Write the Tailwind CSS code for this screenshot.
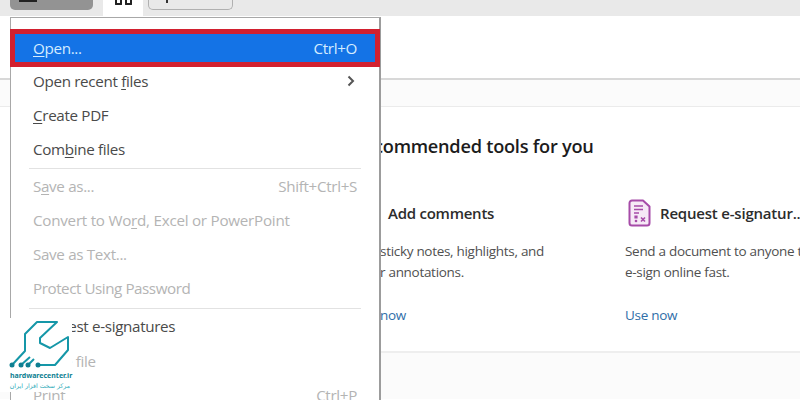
<!DOCTYPE html>
<html>
<head>
    <title>Open menu</title>
    <script src="https://cdn.jsdelivr.net/npm/@tailwindcss/browser@4"></script>
</head>
<body class="bg-white font-['Open_Sans',sans-serif] overflow-hidden">
<div class="relative w-[800px] h-[400px] overflow-hidden">

    <!-- top toolbar -->
    <div class="h-4 bg-[#e9e9e9] flex items-start">
        <div class="ml-[10px] w-[83px] h-[10px] bg-[#939393] rounded-b-[5px] relative">
            <div class="absolute left-[9px] top-0 w-[18px] h-[2px] bg-[#222]"></div>
        </div>
        <div class="ml-[10px] w-10 h-4 bg-white flex justify-center gap-[3px]">
            <div class="w-[7px] h-[5px] border-2 border-t-0 border-[#222] rounded-b-[1px]"></div>
            <div class="w-[7px] h-[5px] border-2 border-t-0 border-[#222] rounded-b-[1px]"></div>
        </div>
        <div class="ml-[5px] w-[85px] h-[10px] border border-t-0 border-[#b0b0b0] rounded-b-[5px] relative">
            <div class="absolute left-[17px] top-0 w-[2px] h-[3px] bg-[#333]"></div>
        </div>
    </div>

    <!-- page behind the menu -->
    <div class="h-[64px] bg-white border-b-2 border-[#d8d8d8]"></div>
    <div class="h-[27px] bg-[#fbfbfb] border-b border-[#ebebeb]"></div>
    <div class="pl-[380px] h-[246px] border-b-2 border-[#eeeeee]">
        <h2 class="-ml-[6px] pt-[25px] text-[18.200px] leading-[28px] font-semibold text-[#1c1c1c] tracking-[-0.25px] whitespace-nowrap overflow-hidden">commended tools for you</h2>
        <div class="flex mt-[41px]">
            <div class="w-[245px] shrink-0">
                <div class="pl-[8px] h-6 flex items-center text-[15px] font-semibold text-[#2c2c2c] tracking-[-0.25px]">Add comments</div>
                <p class="mt-[16px] text-[13.500px] leading-[21px] text-[#505050] tracking-[-0.3px] whitespace-nowrap">sticky notes, highlights, and<br>r annotations.</p>
                <a class="block mt-[22px] text-[13.500px] leading-[21px] text-[#2f6ea8] tracking-[-0.3px]">now</a>
            </div>
            <div class="whitespace-nowrap">
                <div class="h-6 flex items-center gap-[9px]">
                    <svg width="23" height="28" viewBox="0 0 23 28" fill="none" class="shrink-0 ml-[3px]">
                        <path d="M4 1.500h11l6.500 6v16.500a2.500 2.500 0 0 1-2.500 2.500H4A2.500 2.500 0 0 1 1.500 24V4A2.500 2.500 0 0 1 4 1.500z" fill="#f6e9f6" stroke="#a64ba8" stroke-width="2" stroke-linejoin="round"/>
                        <path d="M6 7h9M6 10.500h9M6 14h5" stroke="#a64ba8" stroke-width="1.700"/>
                        <path d="M8 16.500v3" stroke="#a64ba8" stroke-width="3.200"/>
                        <circle cx="8" cy="22" r="1.300" fill="#a64ba8"/>
                        <path d="M13 18.500l4 4M17 18.500l-4 4" stroke="#a64ba8" stroke-width="1.600"/>
                    </svg>
                    <span class="text-[15px] font-semibold text-[#2c2c2c] tracking-[-0.2px]">Request e-signatur...</span>
                </div>
                <p class="mt-[16px] text-[13.500px] leading-[21px] text-[#505050] tracking-[-0.3px]">Send a document to anyone to<br>e-sign online fast.</p>
                <a class="block mt-[22px] text-[13.500px] leading-[21px] text-[#2f6ea8] tracking-[-0.3px]">Use now</a>
            </div>
        </div>
    </div>
    <div class="h-[46px] bg-[#fbfbfb]"></div>

    <!-- file menu -->
    <div class="absolute left-[10px] top-[17px] w-[371px] h-[400px] bg-white border border-[#a8a8a8] border-r-[2px] border-r-[#9c9c9c] text-[15.200px] tracking-[-0.33px] text-[#4a4a4a]">
        <div class="relative z-10 mt-[11px] -mx-px h-[38px] bg-[#1473e6] border-[5px] border-[#d2202f] pl-[18px] pr-[18px] flex items-center justify-between text-[#d4ecff]">
            <span><u class="underline-offset-2">O</u>pen...</span><span>Ctrl+O</span>
        </div>
        <div class="-mt-[3px] h-[34px] pl-[22px] pr-6 flex items-center justify-between">
            <span>Open recent <u class="underline-offset-2">f</u>iles</span>
            <svg width="8" height="12" viewBox="0 0 8 12" fill="none"><path d="M1.500 1.500L6 6l-4.500 4.500" stroke="#555" stroke-width="2"/></svg>
        </div>
        <div class="h-[34px] pl-[22px] flex items-center"><span><u class="underline-offset-2">C</u>reate PDF</span></div>
        <div class="h-[34px] pl-[22px] flex items-center"><span>Com<u class="underline-offset-2">b</u>ine files</span></div>
        <div class="mx-[18px] mt-[2px] border-t border-[#e2e2e2]"></div>
        <div class="text-[#b4b4b4]">
            <div class="h-[34px] pl-[22px] pr-[22px] flex items-center justify-between"><span>S<u class="underline-offset-2">a</u>ve as...</span><span>Shift+Ctrl+S</span></div>
            <div class="h-[34px] pl-[22px] flex items-center tracking-[-0.25px]"><span>Convert to Wo<u class="underline-offset-2">r</u>d, Excel or PowerPoint</span></div>
            <div class="h-[34px] pl-[22px] flex items-center">Save as Text...</div>
            <div class="h-[35px] pl-[22px] flex items-center tracking-[-0.45px]">Protect Using Password</div>
        </div>
        <div class="mx-[18px] mt-[2px] border-t border-[#e2e2e2]"></div>
        <div class="h-[35px] pl-[22px] flex items-center"><span>Request e-signatures</span></div>
        <div class="h-[34px] pl-[22px] flex items-center text-[#b4b4b4]">Share file</div>
        <div class="h-[34px] pl-[22px] pr-[22px] flex items-center justify-between text-[#b4b4b4]"><span>Print</span><span>Ctrl+P</span></div>
    </div>

    <!-- watermark logo -->
    <div class="absolute left-0 top-[318px] w-[72px] h-[74px] bg-white">
        <svg width="72" height="52" viewBox="0 318 72 52" fill="none" class="absolute left-0 top-0">
            <path d="M12 365L25 351V334L37 322H57L40 338V343L50 348L68 337V350L55 365H38" stroke="#1597a8" stroke-width="2" stroke-linejoin="round"/>
            <path d="M21 365L30 357M28 365L34 359" stroke="#1597a8" stroke-width="2"/>
            <circle cx="12" cy="365" r="2.500" fill="#0e7f92"/>
            <circle cx="21" cy="365" r="2.500" fill="#0e7f92"/>
            <circle cx="28" cy="365" r="2.500" fill="#0e7f92"/>
            <circle cx="38" cy="365" r="2.500" fill="#0e7f92"/>
        </svg>
        <div class="absolute left-[10px] top-[52px] text-[7px] leading-[12px] font-bold text-[#0e7f92] whitespace-nowrap font-['Noto_Sans',sans-serif]">hardwarecenter.ir</div>
        <div dir="rtl" class="absolute left-[10px] w-[60px] top-[63px] text-[6.200px] leading-[10px] text-[#2aa9b8] whitespace-nowrap font-['DejaVu_Sans',sans-serif]">مرکز سخت افزار ایران</div>
    </div>
</div>
</body>
</html>
